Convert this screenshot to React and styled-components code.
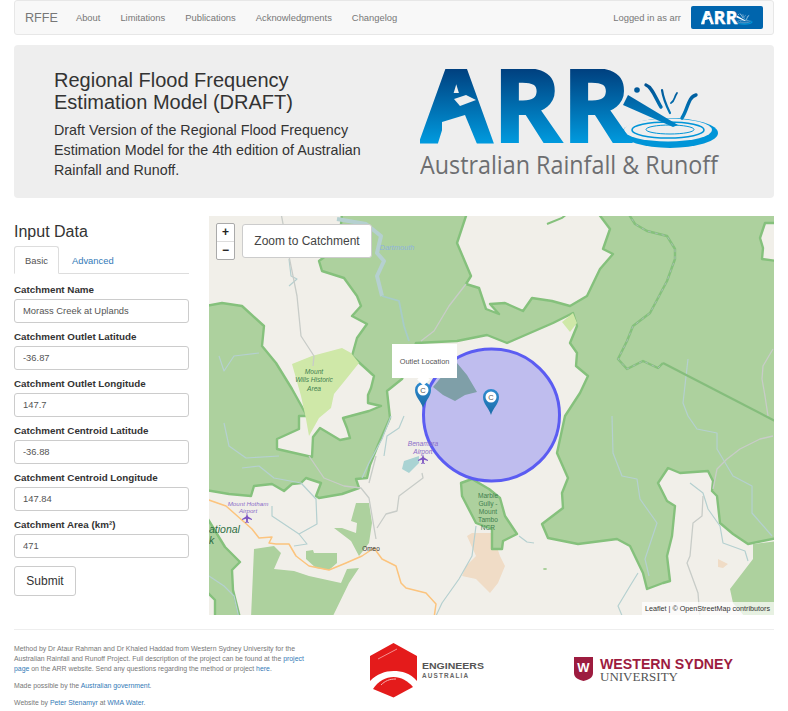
import React from 'react';
import styled, { createGlobalStyle } from 'styled-components';

const GlobalStyle = createGlobalStyle`
  html, body {
    margin: 0;
    padding: 0;
    background: #fff;
    font-family: "Liberation Sans", Arial, sans-serif;
    color: #333;
  }
`;

const Page = styled.div`
  padding: 0 14px;
  width: 760px;
`;

const Navbar = styled.nav`
  display: flex;
  align-items: center;
  height: 35px;
  box-sizing: border-box;
  background: #f8f8f8;
  border: 1px solid #e7e7e7;
  border-radius: 3px;
  margin-bottom: 10px;
  padding: 0 10px;
`;

const Brand = styled.span`
  font-size: 12.6px;
  color: #777;
  margin-right: 8px;
`;

const NavLink = styled.a`
  font-size: 9.4px;
  color: #777;
  padding: 0 10px;
`;

const NavRight = styled.div`
  margin-left: auto;
  display: flex;
  align-items: center;
  gap: 10px;
  font-size: 9.4px;
  color: #777;
`;

const LogoButton = styled.div`
  width: 72px;
  height: 23px;
  background: #0065ad;
  border-radius: 2px;
  display: flex;
  align-items: center;
  justify-content: center;
`;

const Jumbotron = styled.header`
  display: flex;
  align-items: flex-start;
  height: 153px;
  box-sizing: border-box;
  background: #eee;
  border-radius: 4px;
  padding: 24px 0 0 40px;
  margin-bottom: 18px;
`;

const Intro = styled.div`
  width: 320px;
  margin-right: 46px;
`;

const Title = styled.h1`
  margin: 0 0 7px;
  font-size: 20px;
  line-height: 22px;
  font-weight: 400;
  color: #333;
`;

const Lead = styled.p`
  margin: 0;
  font-size: 14.3px;
  line-height: 20px;
  color: #333;
`;

const Main = styled.main`
  display: flex;
  gap: 20px;
`;

const Sidebar = styled.aside`
  width: 175px;
  flex: none;
`;

const SectionTitle = styled.h3`
  margin: 6px 0 4px;
  font-size: 16px;
  line-height: 20px;
  font-weight: 400;
  color: #333;
`;

const Tabs = styled.div`
  display: flex;
  height: 28px;
  box-sizing: border-box;
  border-bottom: 1px solid #ddd;
  margin-bottom: 9px;
  font-size: 9.4px;
`;

const Tab = styled.a`
  box-sizing: border-box;
  height: 28px;
  display: flex;
  align-items: center;
  padding: 0 ${p => (p.$active ? '10px' : '12px')};
  color: ${p => (p.$active ? '#555' : '#337ab7')};
  background: ${p => (p.$active ? '#fff' : 'transparent')};
  border: 1px solid ${p => (p.$active ? '#ddd' : 'transparent')};
  border-bottom-color: ${p => (p.$active ? '#fff' : 'transparent')};
  border-radius: 3px 3px 0 0;
`;

const FormGroup = styled.div`
  margin-bottom: 7px;
`;

const Label = styled.label`
  display: block;
  font-size: 9.8px;
  line-height: 14px;
  font-weight: 700;
  color: #333;
  margin-bottom: 2px;
`;

const Input = styled.input`
  display: block;
  box-sizing: border-box;
  width: 175px;
  height: 24px;
  padding: 0 8px 2px;
  font-family: inherit;
  font-size: 9.4px;
  color: #555;
  background: #fff;
  border: 1px solid #ccc;
  border-radius: 3px;
`;

const SubmitButton = styled.button`
  display: block;
  width: 62px;
  height: 30px;
  margin-top: 8px;
  font-family: inherit;
  font-size: 12px;
  color: #333;
  background: #fff;
  border: 1px solid #ccc;
  border-radius: 3px;
`;

const MapBox = styled.div`
  position: relative;
  width: 565px;
  height: 399px;
  overflow: hidden;
  background: #f1efe9;
`;

const MapSvg = styled.svg`
  display: block;
`;

const ZoomControl = styled.div`
  position: absolute;
  left: 7px;
  top: 7px;
  width: 19px;
  box-sizing: border-box;
  border: 1px solid #aaa;
  border-radius: 2px;
  background: #fff;
`;

const ZoomKey = styled.div`
  height: 17px;
  line-height: 16px;
  text-align: center;
  font-size: 12px;
  font-weight: 700;
  color: #222;
  border-top: ${p => (p.$last ? '1px solid #ddd' : 'none')};
`;

const CatchmentButton = styled.button`
  position: absolute;
  left: 33px;
  top: 8px;
  width: 130px;
  height: 34px;
  font-family: inherit;
  font-size: 12px;
  color: #444;
  background: #fff;
  border: 1px solid #ccc;
  border-radius: 3px;
  padding: 0;
`;

const Popup = styled.div`
  position: absolute;
  left: 183px;
  top: 128px;
  width: 65px;
  height: 34px;
  background: #fff;
  display: flex;
  align-items: center;
  justify-content: center;
  font-size: 7.4px;
  color: #555;
  &::after {
    content: '';
    position: absolute;
    left: 27px;
    bottom: -6px;
    width: 9px;
    height: 9px;
    background: #fff;
    transform: rotate(45deg);
  }
`;

const Attribution = styled.div`
  position: absolute;
  right: 0;
  bottom: 0;
  height: 13px;
  line-height: 13px;
  padding: 0 4px 0 3px;
  background: rgba(255, 255, 255, 0.7);
  font-size: 7.2px;
  color: #333;
`;

const Rule = styled.hr`
  margin: 14px 0 14px;
  border: 0;
  border-top: 1px solid #eee;
`;

const Footer = styled.footer`
  display: flex;
  align-items: flex-start;
`;

const FooterText = styled.div`
  width: 290px;
  flex: none;
  font-size: 6.9px;
  line-height: 10px;
  color: #777;
  margin-right: 66px;
`;

const FooterPara = styled.p`
  margin: 0 0 7px;
  a {
    color: #337ab7;
  }
`;

const FooterLogos = styled.div`
  display: flex;
  align-items: flex-start;
  gap: 88px;
  margin-top: -1px;
`;

const LogoSvg = styled.svg`
  display: block;
  flex: none;
  margin-top: ${p => p.$top || 0}px;
`;

const toPoints = pts => pts.map(p => p.join(',')).join(' ');

// main park, left mass through to the eastern ranges
const parkMain = [
  [133,-3],[130,30],[110,45],[113,55],[135,62],[148,80],[152,90],[143,100],[158,108],[148,122],[143,140],[165,160],[162,172],
  [159,179],[159,187],[172,190],[160,195],[134,202],[138,212],[141,222],[131,224],[111,212],[104,221],[103,241],[68,233],[68,223],
  [90,213],[90,200],[98,200],[83,173],[67,147],[53,130],[55,110],[33,90],[13,87],[-3,90],[-3,274],[20,278],[42,280],[45,270],
  [63,268],[75,275],[83,268],[92,267],[97,262],[112,267],[107,280],[110,282],[133,278],[150,272],[147,263],[158,262],[161,249],
  [169,229],[181,202],[178,175],[193,163],[207,127],[248,125],[278,119],[298,127],[321,117],[344,107],[364,97],[368,110],[361,127],
  [368,137],[367,150],[379,160],[371,177],[356,200],[348,237],[359,262],[353,277],[354,292],[333,308],[339,322],[369,328],[408,323],
  [421,330],[434,357],[438,373],[454,367],[461,365],[458,340],[463,320],[466,290],[458,285],[449,267],[459,252],[471,257],[499,255],
  [504,265],[503,275],[508,280],[511,307],[524,318],[539,328],[568,322],[568,45],[553,43],[554,32],[551,22],[556,7],[568,7],[568,-3],
  [389,-3],[401,13],[394,33],[404,38],[391,53],[378,80],[361,90],[343,85],[323,82],[314,95],[296,87],[281,88],[290,98],[277,93],
  [270,72],[257,68],[262,60],[248,27],[258,-3],
];

const parkOthers = [
  [[252,267],[263,263],[280,273],[291,282],[296,300],[308,318],[294,325],[293,333],[283,333],[283,313],[267,307],[253,280]],
  [[-3,300],[16,331],[31,346],[23,354],[24,374],[31,402],[6,402],[6,384],[-3,375]],
];

const plainGreen = [
  [[45,333],[65,330],[72,337],[65,353],[85,355],[100,360],[132,367],[138,353],[150,352],[140,367],[123,402],[42,402]],
  [[97,335],[104,334],[105,337],[128,337],[128,347],[120,354],[107,352],[97,343]],
  [[147,287],[160,287],[163,307],[160,327],[150,340],[142,325],[125,312],[133,312],[147,317],[148,307],[142,305]],
  [[568,325],[544,328],[544,343],[521,373],[524,387],[537,402],[568,402]],
];

const rivers = [
  [[80,43],[82,60],[88,63],[80,70]],
  [[10,140],[15,155],[25,140],[50,137]],
  [[15,207],[20,230],[37,242],[70,240]],
  [[33,252],[50,250],[65,262],[92,267],[107,283],[108,308],[90,318],[63,300],[63,290]],
  [[90,318],[98,328],[85,330]],
  [[182,200],[173,223],[160,247],[153,262]],
  [[403,200],[404,237],[413,260],[428,263],[431,283],[448,307],[436,343],[440,360]],
  [[479,143],[474,187],[479,200],[488,213],[508,217],[508,233],[524,260],[543,270],[543,297],[563,320]],
  [[481,267],[494,277],[499,293],[511,310],[514,327],[536,335],[539,345]],
  [[429,357],[421,370],[409,390],[414,402]],
  [[267,310],[263,340],[250,363],[233,387],[226,402]],
  [[195,200],[190,212],[178,220],[175,240]],
  [[0,360],[15,370],[25,380],[30,402]],
  [[310,320],[318,326],[325,327]],
];

const roads = [
  [[72,-3],[80,40],[88,80],[92,120],[105,140],[104,150]],
  [[100,240],[115,262],[135,270],[152,272],[160,282],[167,323]],
  [[213,257],[214,262],[190,280],[188,295],[177,298],[168,312]],
  [[167,240],[160,267]],
  [[564,133],[554,150],[553,163],[556,180],[559,200]],
  [[564,220],[551,223],[531,233],[518,243],[508,253],[504,273]],
  [[494,280],[493,300],[484,307],[481,340],[478,347],[489,377],[491,402]],
  [[257,68],[240,90],[225,115],[212,125]],
];

const stateRoad = [
  [-3,283],[17,290],[43,313],[50,322],[63,321],[60,327],[67,328],[80,328],[87,340],[100,350],[120,354],[137,347],[153,340],[165,332],
  [173,343],[187,350],[192,367],[197,372],[217,377],[227,388],[225,402],
];

const border = [
  [419,-3],[426,8],[438,15],[458,20],[466,33],[466,43],[458,65],[449,82],[441,97],[424,110],[418,125],[409,143],[418,153],[434,145],
  [449,152],[454,147],
];

function Pin({ x, y }) {
  return (
    <g transform={`translate(${x} ${y})`}>
      <path d="M0 0 C-2 -7 -8 -11 -8 -18 A8 8 0 1 1 8 -18 C8 -11 2 -7 0 0 Z" fill="url(#pinFill)" />
      <circle cx="0" cy="-18" r="5.5" fill="#fff" />
      <text x="0" y="-15.4" textAnchor="middle" fontSize="7.5" fill="#555" fontFamily="Liberation Sans">C</text>
    </g>
  );
}

function Plane({ x, y }) {
  return (
    <path
      transform={`translate(${x} ${y})`}
      d="M0 -5 L1 -1.5 L5 1 L5 2 L1 .8 L.8 3.4 L2 4.4 L2 5 L0 4.4 L-2 5 L-2 4.4 L-.8 3.4 L-1 .8 L-5 2 L-5 1 L-1 -1.5 Z"
      fill="#7d56c2"
    />
  );
}

const MapLabel = styled.text`
  font-family: "Liberation Sans", sans-serif;
  font-size: ${p => p.$size || 6.6}px;
  font-style: ${p => (p.$plain ? 'normal' : 'italic')};
  fill: ${p => p.$color || '#3f7f50'};
  text-anchor: ${p => p.$anchor || 'middle'};
`;

function BaseMap() {
  return (
    <MapSvg width="565" height="399" viewBox="0 0 565 399">
      <defs>
        <linearGradient id="pinFill" x1="0" y1="0" x2="0" y2="1">
          <stop offset="0" stopColor="#2f8cd0" />
          <stop offset="1" stopColor="#1a6ca8" />
        </linearGradient>
        <filter id="soft">
          <feGaussianBlur stdDeviation="0.45" />
        </filter>
      </defs>
      <g filter="url(#soft)">
        <polygon points={toPoints([[258,320],[263,317],[283,317],[291,340],[296,350],[289,367],[281,377],[267,363],[253,360],[257,350],[267,340]])} fill="#f0dcc6" />
        <polygon points={toPoints([[509,343],[519,348],[514,352],[509,351]])} fill="#f0dcc6" />
        <polygon points={toPoints(parkMain)} fill="#add19e" stroke="#85c17c" strokeWidth="2.4" strokeLinejoin="round" />
        {parkOthers.map((pts, i) => (
          <polygon key={i} points={toPoints(pts)} fill="#add19e" stroke="#85c17c" strokeWidth="2.4" strokeLinejoin="round" />
        ))}
        {plainGreen.map((pts, i) => (
          <polygon key={i} points={toPoints(pts)} fill="#add19e" />
        ))}
        <polygon points={toPoints([[83,148],[103,140],[133,132],[142,137],[150,147],[138,162],[125,178],[122,192],[110,202],[100,220],[97,203],[92,180]])} fill="#cfe8a8" />
        <polygon points={toPoints([[353,106],[364,97],[368,107],[361,116]])} fill="#cfe8a8" />
        <polyline points="338,8 353,2 358,-2" fill="none" stroke="#85c17c" strokeWidth="2" />
        <ellipse cx="336" cy="353" rx="2" ry="1" fill="#a5cf96" />

        <polyline points={toPoints([[128,3],[157,8],[172,20],[168,37],[175,45],[168,60],[173,80]])} fill="none" stroke="#b5d0d0" strokeWidth="4" strokeLinejoin="round" />
        <polyline points={toPoints([[173,80],[190,85],[195,110],[200,125]])} fill="none" stroke="#a7ccc8" strokeWidth="1.8" />
        <polygon points={toPoints([[193,253],[195,245],[210,240],[210,247],[200,257]])} fill="#aad3d3" />
        {rivers.map((pts, i) => (
          <polyline key={i} points={toPoints(pts)} fill="none" stroke="#b5d0d0" strokeWidth="1.2" strokeLinejoin="round" />
        ))}
        {roads.map((pts, i) => (
          <polyline key={i} points={toPoints(pts)} fill="none" stroke="#c8ccc8" strokeWidth="1.3" strokeLinejoin="round" />
        ))}
        <polyline points={toPoints(stateRoad)} fill="none" stroke="#fcc47e" strokeWidth="1.5" strokeLinejoin="round" />
        <polyline points={toPoints(border)} fill="none" stroke="#85c17c" strokeWidth="2.4" strokeLinejoin="round" />
        <polyline points={toPoints(border)} fill="none" stroke="#a9bdb4" strokeWidth="1" strokeDasharray="3 4" />
        <line x1="454" y1="147" x2="568" y2="206" stroke="#85bd7c" strokeWidth="2.2" />
      </g>

      <ellipse cx="282.5" cy="199" rx="68" ry="66" fill="#bfbdee" stroke="#5b5cf2" strokeWidth="3" />
      <polygon points={toPoints([[240,132],[248,147],[258,159],[268,176],[256,179],[246,185],[234,179],[224,171],[234,159]])} fill="#7f9fa8" filter="url(#soft)" />

      <MapLabel x="188" y="34" $color="#8fb4dc" $size={7.5}>Dartmouth</MapLabel>
      <MapLabel x="105" y="158">Mount</MapLabel>
      <MapLabel x="105" y="166">Wills Historic</MapLabel>
      <MapLabel x="105" y="175">Area</MapLabel>
      <MapLabel x="214" y="230" $color="#8a6cc8">Benambra</MapLabel>
      <MapLabel x="214" y="238" $color="#8a6cc8">Airport</MapLabel>
      <Plane x={214} y={243} />
      <MapLabel x="39" y="290" $color="#8a6cc8" $size={6.2}>Mount Hotham</MapLabel>
      <MapLabel x="39" y="297" $color="#8a6cc8" $size={6.2}>Airport</MapLabel>
      <Plane x={38} y={302} />
      <MapLabel x="0" y="317" $anchor="start" $size={10.5} $color="#2f6f45">ational</MapLabel>
      <MapLabel x="0" y="328" $anchor="start" $size={10.5} $color="#2f6f45">k</MapLabel>
      <MapLabel x="162" y="335" $plain $size={6.4} $color="#333">Omeo</MapLabel>
      <MapLabel x="279" y="282" $plain>Marble</MapLabel>
      <MapLabel x="279" y="290" $plain>Gully -</MapLabel>
      <MapLabel x="279" y="298" $plain>Mount</MapLabel>
      <MapLabel x="279" y="306" $plain>Tambo</MapLabel>
      <MapLabel x="279" y="314" $plain>NCR</MapLabel>

      <Pin x={214} y={192} />
      <Pin x={282} y={199} />
    </MapSvg>
  );
}

function ArrMark({ width, height, mono, withCaption }) {
  const fill = mono ? '#fff' : 'url(#arrFill)';
  const gap = mono ? '#0065ad' : '#eee';
  return (
    <svg width={width} height={height} viewBox={withCaption ? '0 0 300 112' : '0 0 300 81'}>
      {!mono && (
        <defs>
          <linearGradient id="arrFill" gradientUnits="userSpaceOnUse" x1="0" y1="0" x2="0" y2="73">
            <stop offset="0" stopColor="#00407f" />
            <stop offset="1" stopColor="#0099dd" />
          </linearGradient>
        </defs>
      )}
      {/* ripples sit under the letters */}
      <ellipse cx="250" cy="64" rx="48" ry="15" fill="#0095d8" />
      <ellipse cx="248" cy="61" rx="44" ry="11.5" fill={gap} />
      <ellipse cx="248" cy="61" rx="36" ry="8" fill="none" stroke={mono ? '#fff' : '#0095d8'} strokeWidth="1.6" />
      <ellipse cx="250" cy="60.5" rx="24" ry="4.5" fill="none" stroke={mono ? '#fff' : '#0095d8'} strokeWidth="1" />

      <text
        x="0"
        y="73"
        fontFamily="Open Sans, Liberation Sans, sans-serif"
        fontWeight="700"
        fontSize="102"
        fill={fill}
        stroke={fill}
        strokeWidth="2"
        textLength="211"
        lengthAdjust="spacingAndGlyphs"
      >
        ARR
      </text>
      {/* the A has a slanted bar and an open foot */}
      <polygon points="30,24 50,24 60,42 56,50 20,60" fill={fill} />
      <polygon points="22,53 45,46 57,75 22,75" fill={gap} />
      <polygon points="34,30 40,37 56,31 46,26" fill={gap} />

      <polygon points="208,26 258,56 253,58 203,36" fill={fill} />
      <g fill="none" stroke={fill} strokeLinecap="round">
        <path d="M226 16 C232 18 236 30 241 38" strokeWidth="3.4" />
        <path d="M242 21 C243 28 245 34 250 44" strokeWidth="2.2" />
        <path d="M251 34 C255 32 254 28 257 24" strokeWidth="1.8" />
        <path d="M276 26 C268 28 268 40 262 49" strokeWidth="3.4" />
      </g>
      <circle cx="217" cy="21" r="2.8" fill={fill} />
      {withCaption && (
        <text x="0" y="105" fontFamily="Open Sans, Liberation Sans, sans-serif" fontSize="26" fill="#6d6e71" textLength="298" lengthAdjust="spacingAndGlyphs">
          Australian Rainfall &amp; Runoff
        </text>
      )}
    </svg>
  );
}

function EngineersLogo() {
  return (
    <LogoSvg width="116" height="56" viewBox="0 0 116 56">
      <path d="M23.5 0 L47 13 L47 38 C40 30 32 28 23.5 28 C15 28 7 31 0 38 L0 13 Z" fill="#e41b1b" />
      <path d="M3 46 C8 38 16 34 23.5 34 C31 34 38 38 43 44 L23.5 54.5 Z" fill="#e41b1b" />
      <path d="M8 16 L27 6" stroke="#f38f8f" strokeWidth="1" />
      <path d="M11 42 C15 38 19 36 26 36" stroke="#f7b0b0" strokeWidth="1" fill="none" />
      <text x="52" y="26" fontFamily="Liberation Sans, sans-serif" fontSize="9.6" fontWeight="700" fill="#555" textLength="62" lengthAdjust="spacingAndGlyphs">ENGINEERS</text>
      <text x="52" y="35" fontFamily="Liberation Sans, sans-serif" fontSize="6.4" fontWeight="700" fill="#666" textLength="46">AUSTRALIA</text>
    </LogoSvg>
  );
}

function WesternSydneyLogo() {
  return (
    <LogoSvg $top={13} width="160" height="30" viewBox="0 0 160 30">
      <path d="M0 1 L19 1 L19 17 C19 22 14 24 9.5 25 C5 24 0 22 0 17 Z" fill="#9d1c3f" />
      <text x="9.5" y="15.5" textAnchor="middle" fontFamily="Liberation Sans, sans-serif" fontSize="13" fontWeight="700" fill="#fff">W</text>
      <text x="26" y="13" fontFamily="Liberation Sans, sans-serif" fontSize="15.5" fontWeight="700" fill="#9d1c3f" textLength="133" lengthAdjust="spacingAndGlyphs">WESTERN SYDNEY</text>
      <text x="26" y="25" fontFamily="Liberation Serif, serif" fontSize="12" fill="#555" textLength="78" lengthAdjust="spacingAndGlyphs">UNIVERSITY</text>
    </LogoSvg>
  );
}

const fields = [
  ['Catchment Name', 'Morass Creek at Uplands'],
  ['Catchment Outlet Latitude', '-36.87'],
  ['Catchment Outlet Longitude', '147.7'],
  ['Catchment Centroid Latitude', '-36.88'],
  ['Catchment Centroid Longitude', '147.84'],
  ['Catchment Area (km²)', '471'],
];

export default function App() {
  return (
    <Page>
      <GlobalStyle />
      <Navbar>
        <Brand>RFFE</Brand>
        <NavLink>About</NavLink>
        <NavLink>Limitations</NavLink>
        <NavLink>Publications</NavLink>
        <NavLink>Acknowledgments</NavLink>
        <NavLink>Changelog</NavLink>
        <NavRight>
          <span>Logged in as arr</span>
          <LogoButton>
            <ArrMark width={52} height={14} mono />
          </LogoButton>
        </NavRight>
      </Navbar>

      <Jumbotron>
        <Intro>
          <Title>Regional Flood Frequency<br />Estimation Model (DRAFT)</Title>
          <Lead>Draft Version of the Regional Flood Frequency Estimation Model for the 4th edition of Australian Rainfall and Runoff.</Lead>
        </Intro>
        <ArrMark width={300} height={112} withCaption />
      </Jumbotron>

      <Main>
        <Sidebar>
          <SectionTitle>Input Data</SectionTitle>
          <Tabs>
            <Tab $active>Basic</Tab>
            <Tab>Advanced</Tab>
          </Tabs>
          {fields.map(([label, value]) => (
            <FormGroup key={label}>
              <Label>{label}</Label>
              <Input defaultValue={value} />
            </FormGroup>
          ))}
          <SubmitButton>Submit</SubmitButton>
        </Sidebar>
        <MapBox>
          <BaseMap />
          <ZoomControl>
            <ZoomKey>+</ZoomKey>
            <ZoomKey $last>−</ZoomKey>
          </ZoomControl>
          <CatchmentButton>Zoom to Catchment</CatchmentButton>
          <Popup>Outlet Location</Popup>
          <Attribution>Leaflet | © OpenStreetMap contributors</Attribution>
        </MapBox>
      </Main>

      <Rule />

      <Footer>
        <FooterText>
          <FooterPara>
            Method by Dr Ataur Rahman and Dr Khaled Haddad from Western Sydney University for the Australian Rainfall and Runoff Project. Full description of the project can be found at the <a>project page</a> on the ARR website. Send any questions regarding the method or project <a>here</a>.
          </FooterPara>
          <FooterPara>Made possible by the <a>Australian government</a>.</FooterPara>
          <FooterPara>Website by <a>Peter Stenamyr</a> at <a>WMA Water</a>.</FooterPara>
        </FooterText>
        <FooterLogos>
          <EngineersLogo />
          <WesternSydneyLogo />
        </FooterLogos>
      </Footer>
    </Page>
  );
}
